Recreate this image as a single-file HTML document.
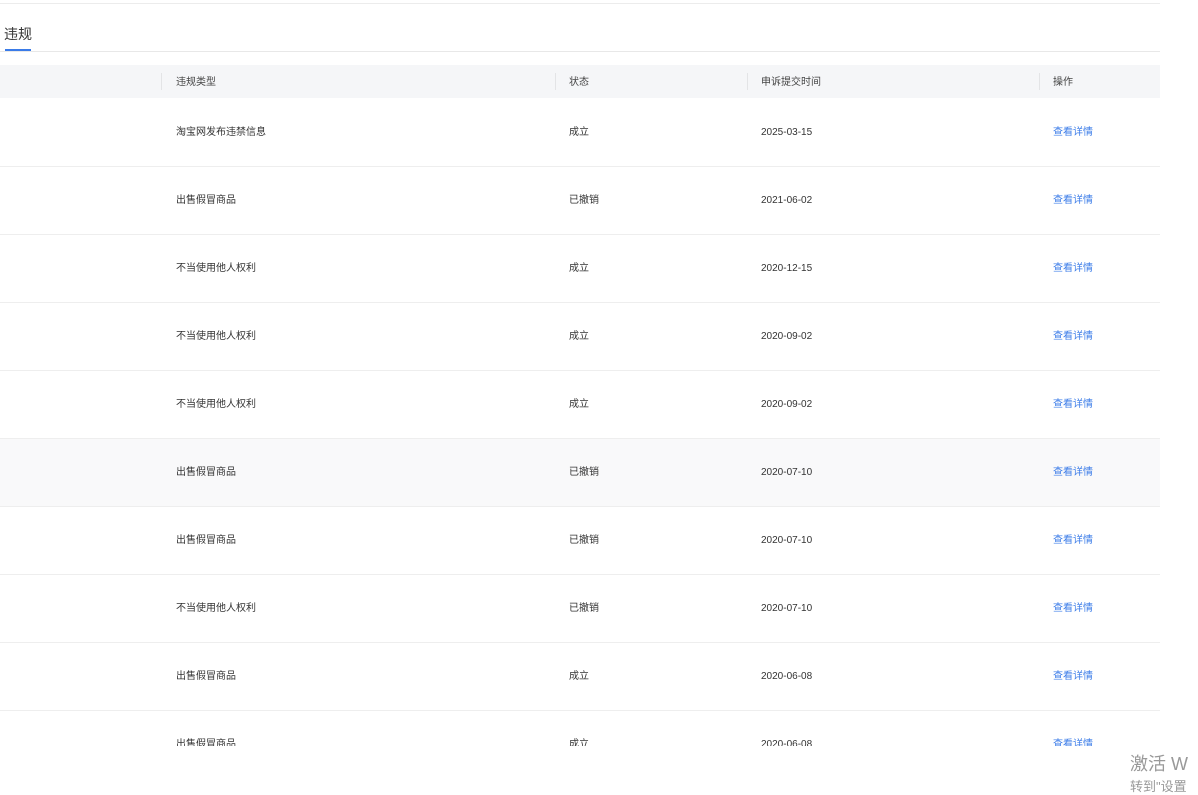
<!DOCTYPE html>
<html><head><meta charset="utf-8"><style>
*{margin:0;padding:0;box-sizing:border-box}
body{width:1198px;height:794px;background:#fff;position:relative;overflow:hidden;font-family:"Liberation Sans","Noto Sans CJK SC",sans-serif;color:#333}
.topline{position:absolute;left:0;top:3px;width:1160px;height:1px;background:#ececec}
.tab{position:absolute;left:4px;top:24px;font-size:14px;color:#333}
.tabline{position:absolute;left:0;top:51px;width:1160px;height:1px;background:#e8e8e8}
.tabbar{position:absolute;left:5px;top:49px;width:26px;height:2px;background:#3a7be8}
.head{position:absolute;left:0;top:65px;width:1160px;height:33px;background:#f5f6f8;font-size:10px;color:#444}
.sep{position:absolute;top:8px;width:1px;height:17px;background:#e3e4e6}
.c{position:absolute;white-space:nowrap;font-size:10px;line-height:12px;height:12px}
.rows{position:absolute;left:0;top:99px;width:1160px;height:647px;overflow:hidden}
.row{position:relative;height:68px;border-bottom:1px solid #eeeeee}
.row .c{top:28px}
.d{font-family:"Liberation Sans",sans-serif}
.link{color:#3a7be8}
.wm1{position:absolute;left:1130px;top:750px;font-size:18px;color:#999}
.wm2{position:absolute;left:1130px;top:776px;font-size:13px;color:#999}
</style></head><body>
<div class="topline"></div>
<div class="tab">违规</div>
<div class="tabline"></div>
<div class="tabbar"></div>
<div class="head">
<div class="sep" style="left:161px"></div><div class="sep" style="left:555px"></div><div class="sep" style="left:747px"></div><div class="sep" style="left:1039px"></div>
<div class="c" style="left:176px;top:12px">违规类型</div>
<div class="c" style="left:569px;top:12px">状态</div>
<div class="c" style="left:761px;top:12px">申诉提交时间</div>
<div class="c" style="left:1053px;top:12px">操作</div>
</div>
<div class="rows">
<div class="row"><div class="c" style="left:176px">淘宝网发布违禁信息</div><div class="c" style="left:569px">成立</div><div class="c d" style="left:761px">2025-03-15</div><div class="c link" style="left:1053px">查看详情</div></div>
<div class="row"><div class="c" style="left:176px">出售假冒商品</div><div class="c" style="left:569px">已撤销</div><div class="c d" style="left:761px">2021-06-02</div><div class="c link" style="left:1053px">查看详情</div></div>
<div class="row"><div class="c" style="left:176px">不当使用他人权利</div><div class="c" style="left:569px">成立</div><div class="c d" style="left:761px">2020-12-15</div><div class="c link" style="left:1053px">查看详情</div></div>
<div class="row"><div class="c" style="left:176px">不当使用他人权利</div><div class="c" style="left:569px">成立</div><div class="c d" style="left:761px">2020-09-02</div><div class="c link" style="left:1053px">查看详情</div></div>
<div class="row"><div class="c" style="left:176px">不当使用他人权利</div><div class="c" style="left:569px">成立</div><div class="c d" style="left:761px">2020-09-02</div><div class="c link" style="left:1053px">查看详情</div></div>
<div class="row" style="background:#f9f9fa"><div class="c" style="left:176px">出售假冒商品</div><div class="c" style="left:569px">已撤销</div><div class="c d" style="left:761px">2020-07-10</div><div class="c link" style="left:1053px">查看详情</div></div>
<div class="row"><div class="c" style="left:176px">出售假冒商品</div><div class="c" style="left:569px">已撤销</div><div class="c d" style="left:761px">2020-07-10</div><div class="c link" style="left:1053px">查看详情</div></div>
<div class="row"><div class="c" style="left:176px">不当使用他人权利</div><div class="c" style="left:569px">已撤销</div><div class="c d" style="left:761px">2020-07-10</div><div class="c link" style="left:1053px">查看详情</div></div>
<div class="row"><div class="c" style="left:176px">出售假冒商品</div><div class="c" style="left:569px">成立</div><div class="c d" style="left:761px">2020-06-08</div><div class="c link" style="left:1053px">查看详情</div></div>
<div class="row"><div class="c" style="left:176px">出售假冒商品</div><div class="c" style="left:569px">成立</div><div class="c d" style="left:761px">2020-06-08</div><div class="c link" style="left:1053px">查看详情</div></div>
</div>
<div class="wm1">激活 W</div>
<div class="wm2">转到"设置</div>
</body></html>
